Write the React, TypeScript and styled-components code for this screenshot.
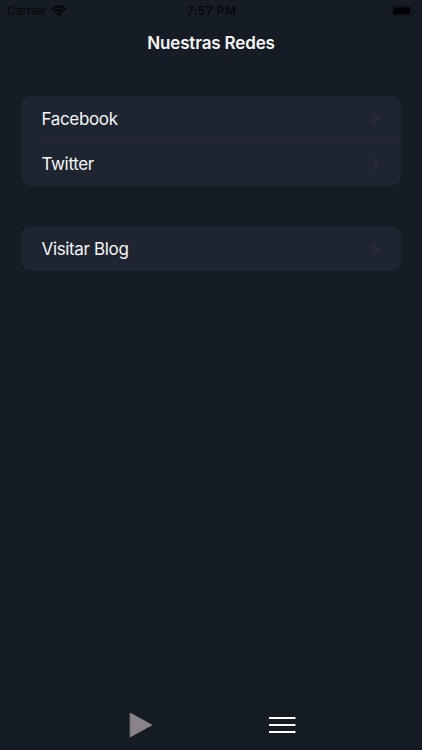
import React from "react";
import styled, { createGlobalStyle } from "styled-components";

const GlobalStyle = createGlobalStyle`
  * { box-sizing: border-box; }
  body {
    margin: 0;
    background: #151c23;
    font-family: Inter, "Liberation Sans", sans-serif;
  }
`;

const Screen = styled.div`
  display: flex;
  flex-direction: column;
  height: 750px;
  overflow: hidden;
  background: #151c23;
  color: #f5f6f8;
`;

const Header = styled.header`
  height: 67px;
  flex: none;
  background: #151c25;
  border-bottom: 1px solid #191f28;
`;

const StatusBar = styled.div`
  display: grid;
  grid-template-columns: 1fr auto 1fr;
  align-items: center;
  height: 22px;
  padding: 0 6px 0 7px;
  color: #030507;
`;

const Carrier = styled.div`
  display: flex;
  align-items: center;
  gap: 5px;
  font-size: 11.8px;
  letter-spacing: 0.08px;
  line-height: 22px;
`;

const Clock = styled.time`
  font-size: 12px;
  font-weight: 500;
  letter-spacing: 0.4px;
  line-height: 22px;
`;

const Battery = styled.svg`
  justify-self: end;
  display: block;
`;

const Title = styled.h1`
  margin: 0;
  font-size: 17px;
  font-weight: 600;
  letter-spacing: -0.15px;
  line-height: 43px;
  text-align: center;
`;

const Content = styled.main`
  flex: 1;
  display: flex;
  flex-direction: column;
  gap: 40px;
  padding: 29px 21px 0;
`;

const Card = styled.section`
  border-radius: 10px;
  background: #1f2530;
  overflow: hidden;
`;

const Row = styled.a`
  display: flex;
  align-items: center;
  justify-content: space-between;
  height: 45px;
  padding: 0 21px 0 20.5px;
  font-size: 17px;
  letter-spacing: -0.35px;
`;

const Divider = styled.div`
  height: 1px;
  margin: -1px 0 0 16px;
  background: #252a34;
`;

const TabBar = styled.nav`
  display: grid;
  grid-template-columns: 1fr 1fr;
  height: 50px;
  padding: 2px 70px 0;
  border-bottom: 2px solid #14171f;
`;

const Tab = styled.button`
  display: flex;
  align-items: center;
  justify-content: center;
  padding: 0;
  border: 0;
  background: none;
`;

const Chevron = () => (
  <svg width="9" height="14" viewBox="0 0 9 14" fill="none" stroke="#292e39" strokeWidth="1.8" strokeLinecap="round" strokeLinejoin="round">
    <path d="M2 1.7 7.2 7 2 12.3" />
  </svg>
);

const Wifi = () => (
  <svg width="16" height="12" viewBox="0 0 16 12" fill="none" stroke="currentColor" strokeWidth="2.1">
    <path d="M1 4.4Q8-2.2 15 4.4M3.5 7Q8 2.9 12.5 7" />
    <path d="M5.4 8.9Q8 6.7 10.6 8.9L8 11.6Z" fill="currentColor" stroke="none" />
  </svg>
);

const groups = [["Facebook", "Twitter"], ["Visitar Blog"]];

export default function App() {
  return (
    <Screen>
      <GlobalStyle />
      <Header>
        <StatusBar>
          <Carrier>Carrier <Wifi /></Carrier>
          <Clock>7:57 PM</Clock>
          <Battery width="25" height="12" viewBox="0 0 25 12">
            <rect x=".7" y=".7" width="21.6" height="10.4" rx="3" fill="none" stroke="#10151b" />
            <rect x="2.3" y="2.3" width="17" height="7.2" rx="1.5" fill="#000203" />
            <path d="M23.4 4v4q1.3-.5 1.3-2T23.4 4Z" fill="#0d1218" />
          </Battery>
        </StatusBar>
        <Title>Nuestras Redes</Title>
      </Header>
      <Content>
        {groups.map((items) => (
          <Card key={items[0]}>
            {items.map((item, index) => (
              <React.Fragment key={item}>
                {index > 0 && <Divider />}
                <Row><span>{item}</span><Chevron /></Row>
              </React.Fragment>
            ))}
          </Card>
        ))}
      </Content>
      <TabBar>
        <Tab aria-label="Play">
          <svg width="24" height="26" viewBox="0 0 24 26">
            <path d="M1.2 1.2v23.6L22.8 13Z" fill="#89838a" stroke="#89838a" strokeLinejoin="round" />
          </svg>
        </Tab>
        <Tab aria-label="Menu">
          <svg width="28" height="18" viewBox="0 0 28 18" stroke="#fff" strokeWidth="2" strokeLinecap="butt">
            <path d="M1 2h26.5M1 9h26.5M1 16h26.5" />
          </svg>
        </Tab>
      </TabBar>
    </Screen>
  );
}
